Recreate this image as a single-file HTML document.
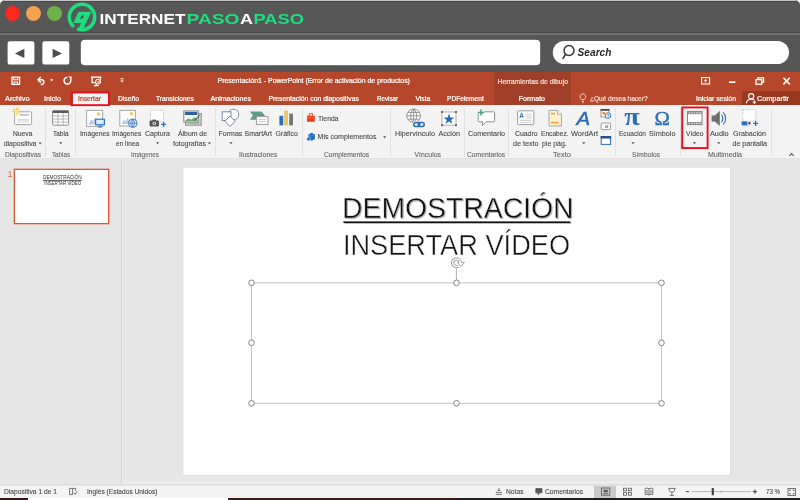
<!DOCTYPE html>
<html><head><meta charset="utf-8"><title>PowerPoint</title>
<style>
html,body{margin:0;padding:0;overflow:hidden;}
body{width:800px;height:500px;overflow:hidden;background:#fff;font-family:"Liberation Sans",sans-serif;position:relative;}
.a{position:absolute;}
.t{position:absolute;white-space:pre;-webkit-text-stroke:0.22px currentColor;line-height:10px;height:10px;transform-origin:0 50%;font-family:"Liberation Sans",sans-serif;}
.d{-webkit-text-stroke:0.1px currentColor;}
.sep{position:absolute;width:1px;top:108px;height:48px;background:#e1e1e1;}
svg{position:absolute;overflow:visible;}
#root{position:absolute;left:0;top:0;width:800px;height:500px;will-change:transform;opacity:0.9999;}
</style></head><body><div id="root">
<!-- browser frame -->
<div class="a" style="left:0;top:0;width:800px;height:72px;background:#575757;border-radius:5px 5px 0 0;"></div>
<div class="a" style="left:0;top:0;width:800px;height:8px;border-radius:5px 5px 0 0;border-top:1px solid #c4c4c4;box-sizing:border-box;"></div>
<div class="a" style="left:0;top:1px;width:800px;height:8px;border-radius:5px 5px 0 0;border-top:1px solid #494949;box-sizing:border-box;"></div>
<div class="a" style="left:0;top:32px;width:800px;height:1px;background:#4a4a4a;"></div>
<div class="a" style="left:0;top:33px;width:800px;height:2px;background:#6e6e6e;"></div>
<div class="a" style="left:0;top:35px;width:800px;height:37px;background:#565656;"></div>
<!-- traffic lights -->
<div class="a" style="left:4.9px;top:5.9px;width:15.4px;height:15.4px;border-radius:50%;background:#fb2a1c;"></div>
<div class="a" style="left:25.9px;top:5.9px;width:15.4px;height:15.4px;border-radius:50%;background:#f3a24e;"></div>
<div class="a" style="left:46.9px;top:5.9px;width:15.4px;height:15.4px;border-radius:50%;background:#6cb24b;"></div>
<!-- logo -->
<svg style="left:0;top:0" width="320" height="36" viewBox="0 0 320 36">
 <circle cx="82" cy="17" r="12.7" fill="none" stroke="#1fdc7e" stroke-width="3.6" stroke-dasharray="72.6 7.2" stroke-linecap="round" transform="rotate(136 82 17)"/>
 <path d="M79 12.4 H90.4 L83.2 27.2 H79.8 L82.2 22.4 H74.4 Z" fill="#1fdc7e" stroke="#1fdc7e" stroke-width="1.4" stroke-linejoin="round"/>
 <path d="M81.6 15.6 H84.2 L82.6 18.8 H80 Z" fill="#4a5a50"/>
 <text x="99.5" y="23.6" font-family="Liberation Sans, sans-serif" font-weight="bold" font-size="15.5" fill="#fff" textLength="86" lengthAdjust="spacingAndGlyphs">INTERNET</text>
 <text x="186.5" y="23.6" font-family="Liberation Sans, sans-serif" font-weight="bold" font-size="15.5" fill="#1fdc7e" textLength="53" lengthAdjust="spacingAndGlyphs">PASO</text>
 <text x="240" y="23.6" font-family="Liberation Sans, sans-serif" font-weight="bold" font-size="15.5" fill="#fff" textLength="13" lengthAdjust="spacingAndGlyphs">A</text>
 <text x="253.5" y="23.6" font-family="Liberation Sans, sans-serif" font-weight="bold" font-size="15.5" fill="#1fdc7e" textLength="50.5" lengthAdjust="spacingAndGlyphs">PASO</text>
</svg>
<!-- nav buttons -->
<svg style="left:0;top:0" width="800" height="72" viewBox="0 0 800 72">
 <rect x="7.6" y="41.3" width="26.8" height="23.3" rx="2.2" fill="#fff"/>
 <rect x="42.4" y="41.3" width="26.9" height="23.3" rx="2.2" fill="#fff"/>
 <path d="M15 53.4 L24.4 48.7 L24.4 58.1 Z" fill="#4c4c4c"/><path d="M62 53.4 L52.6 48.7 L52.6 58.1 Z" fill="#4c4c4c"/>
 <rect x="80.8" y="39.1" width="459.4" height="26.6" rx="4" fill="#484848"/>
 <rect x="80.8" y="39.7" width="459.4" height="25.6" rx="4" fill="#fff"/>
 <rect x="552.8" y="40.9" width="236.2" height="23.2" rx="11.6" fill="#fff"/>
</svg>
<svg style="left:555px;top:40px" width="70" height="26"><circle cx="14" cy="10.5" r="5" fill="none" stroke="#333" stroke-width="1.4"/><path d="M10.6 14.4 L8 18.4" stroke="#333" stroke-width="1.6" stroke-linecap="round"/>
<text x="22.5" y="15.6" font-family="Liberation Sans, sans-serif" font-style="italic" font-weight="bold" font-size="10" fill="#2a2a2a" textLength="34" lengthAdjust="spacingAndGlyphs">Search</text></svg>

<!-- powerpoint title + tabs -->
<div class="a" style="left:0;top:72px;width:800px;height:33px;background:#b7472a;"></div>
<div class="a" style="left:494px;top:72px;width:77px;height:33px;background:#9f3f27;"></div>
<div class="a" style="left:742px;top:91px;width:58px;height:14px;background:#98391f;"></div>
<div class="a" style="left:73px;top:93px;width:35px;height:12px;background:#f3f3f3;"></div>
<!-- ribbon -->
<div class="a" style="left:0;top:105px;width:800px;height:54px;background:#f3f3f3;"></div>
<div class="a" style="left:0;top:158px;width:800px;height:1px;background:#e2e2e2;"></div>
<!-- workspace -->
<div class="a" style="left:0;top:159px;width:800px;height:326px;background:#e6e6e6;"></div>
<div class="a" style="left:121px;top:159px;width:1px;height:325px;background:#d6d6d6;"></div>
<div class="a" style="left:122px;top:159px;width:1px;height:325px;background:#ececec;"></div>
<div class="a" style="left:123px;top:481px;width:677px;height:3px;background:#ececec;"></div>
<!-- thumbnail -->
<div class="a" style="left:13.6px;top:169px;width:93px;height:53px;border:1px solid #dc5733;box-shadow:0 0 0 0.5px #e48a6e;background:#fff;"></div>
<!-- slide -->

<!-- status bar -->
<div class="a" style="left:0;top:484px;width:800px;height:14px;background:#f4f4f4;"></div>
<div class="a" style="left:0;top:484px;width:800px;height:2px;background:linear-gradient(#dcdcdc,#e6e6e6);"></div>
<div class="a" style="left:0;top:497.5px;width:800px;height:2.5px;background:#fff;"></div>
<div class="a" style="left:0;top:497.5px;width:28px;height:2.5px;background:#34121c;"></div>
<div class="a" style="left:228px;top:497.5px;width:232px;height:2.5px;background:#3a1a1a;"></div>
<div class="a" style="left:460px;top:497.5px;width:340px;height:2.5px;background:#1e1e1e;"></div>
<div class="a" style="left:594px;top:486px;width:22px;height:11.5px;background:#c9c9c9;"></div>

<!-- ribbon separators -->
<div class="sep" style="left:45px"></div><div class="sep" style="left:75px"></div><div class="sep" style="left:215px"></div>
<div class="sep" style="left:302px"></div><div class="sep" style="left:390px"></div><div class="sep" style="left:464px"></div>
<div class="sep" style="left:508px"></div><div class="sep" style="left:614.5px"></div><div class="sep" style="left:679.5px"></div><div class="sep" style="left:771px"></div>

<svg style="left:0;top:0" width="800" height="500" viewBox="0 0 800 500">
<!-- ===== title bar quick access icons ===== -->
<g fill="none" stroke="#fff" stroke-width="1.3">
 <path d="M12 77.2 H19.6 V84.4 H12 Z"/>
 <path d="M13.8 77.2 V79.8 H17.8 V77.2" stroke-width="1.1"/>
 <path d="M14 84.4 V82 H17.6 V84.4" stroke-width="1.1"/>
 <!-- undo -->
 <path d="M38.2 79.8 H42.4 A2.5 2.5 0 0 1 42.4 84.4 H40.8" stroke-width="1.5"/>
 <path d="M40.8 77 L38 79.8 L40.8 82.6" stroke-width="1.5"/>
 <!-- redo -->
 <path d="M70.4 79 A3.4 3.4 0 1 1 67.4 77.3" stroke-width="1.5"/>
 <path d="M68.2 76.4 L71.6 76.4 L71.6 79.8 Z" fill="#fff" stroke="none"/>
 <!-- present -->
 <path d="M91 77.2 H101.4" stroke-width="1.4"/>
 <path d="M92.2 77.4 V82.6 H100.2 V77.4"/>
 <path d="M96.2 82.8 V85.2 M93.8 85.6 H98.6"/>
 <circle cx="97.8" cy="81.8" r="2.4" fill="#b7472a" stroke-width="1"/>
 <path d="M96.6 81.6 L99.2 82 L97.2 83.2" stroke-width="0.7"/>
</g>
<path d="M50 79.2 H53.4 L51.7 81.4 Z" fill="#fff"/>
<path d="M120.6 78.8 H123.6" stroke="#fff" stroke-width="1"/>
<path d="M120.4 80.6 H123.8 L122.1 82.6 Z" fill="#fff"/>
<!-- window controls -->
<g fill="none" stroke="#fff" stroke-width="1.1">
 <rect x="701.6" y="77.6" width="8" height="6.4"/>
 <path d="M705.6 82.6 V79.6 M704.2 80.8 L705.6 79.4 L707 80.8" stroke-width="0.9"/>
 <path d="M729 82.2 H735.4" stroke-width="1.6"/>
 <rect x="756" y="79.6" width="5.8" height="4.6" stroke-width="1.3"/>
 <path d="M757.8 79.4 V77.8 H763.6 V82.2 H762" stroke-width="1.3"/>
 <path d="M783.4 77.8 L789.8 84.4 M789.8 77.8 L783.4 84.4" stroke-width="1.6"/>
</g>
<!-- lightbulb -->
<g fill="none" stroke="#f6ddd5" stroke-width="0.9">
 <path d="M581.6 99.6 C579.4 97.6 579.4 94.2 582.9 93.8 C586.4 94.2 586.4 97.6 584.2 99.6 Z"/>
 <path d="M581.8 101.2 H584 M582.2 102.6 H583.6"/>
</g>
<!-- share person -->
<g fill="none" stroke="#fff" stroke-width="1.1">
 <circle cx="751.2" cy="96.2" r="2.6"/>
 <path d="M746.4 103.4 C746.6 99.6 749 99.2 751.2 99.2 C752.6 99.2 753.6 99.6 754.2 100.2"/>
 <path d="M754.4 100.4 V104 M752.6 102.2 H756.2" stroke-width="1"/>
</g>

<!-- ===== ribbon icons ===== -->
<!-- Nueva diapositiva -->
<rect x="14.6" y="111.8" width="17" height="12.8" rx="1" fill="#fff" stroke="#a0a0a0" stroke-width="1"/>
<rect x="19.6" y="114" width="9.6" height="1.8" fill="#c4c4c4"/>
<rect x="17.4" y="119.2" width="11.6" height="1.4" fill="#cfcfcf"/>
<rect x="17.4" y="121.4" width="11.6" height="1" fill="#dcdcdc"/>
<g stroke="#f0c93c" stroke-width="1.1"><path d="M16.4 107.6 V115.2 M12.6 111.4 H20.2 M13.7 108.7 L19.1 114.1 M19.1 108.7 L13.7 114.1"/></g>
<circle cx="16.4" cy="111.4" r="2" fill="#fbe58a"/>
<!-- Tabla -->
<rect x="52.6" y="110.8" width="16" height="14.4" rx="1" fill="#fff" stroke="#8e8e8e" stroke-width="1"/>
<rect x="52.6" y="110.6" width="16" height="2.4" fill="#595959"/>
<g stroke="#a8a8a8" stroke-width="0.8"><path d="M53 116 H68.4 M53 119 H68.4 M53 122 H68.4 M57.9 113 V125 M63.2 113 V125"/></g>
<!-- Imágenes -->
<rect x="86.6" y="110.4" width="16" height="16" fill="#fff" stroke="#a6a6a6" stroke-width="1"/>
<path d="M88.4 124.4 L91.2 119.4 L93 121.6 L95 117.4 L96.6 120 V124.4 Z" fill="#b6cde6"/>
<circle cx="98.6" cy="114" r="1.7" fill="#f2c84a"/>
<rect x="95.6" y="119.2" width="8.8" height="5.6" fill="#dcebfa" stroke="#2e75c8" stroke-width="1.2"/>
<path d="M100 125 V126.6 M97.8 127 H102.2" stroke="#2e75c8" stroke-width="1.1"/>
<!-- Imágenes en línea -->
<rect x="119.8" y="110.4" width="15.6" height="15.6" fill="#fff" stroke="#a6a6a6" stroke-width="1"/>
<path d="M121.6 124 L124 119.6 L125.6 121.6 L127.6 117.6 L129.6 121 V124 Z" fill="#b6cde6"/>
<circle cx="131.4" cy="113.8" r="1.7" fill="#f2c84a"/>
<circle cx="132.8" cy="123.2" r="4.1" fill="#dce9f8" stroke="#3a78c4" stroke-width="1"/>
<path d="M128.8 123.2 H136.8 M132.8 119.2 V127.2 M132.8 119.2 C130.4 121.4 130.4 125 132.8 127.2 M132.8 119.2 C135.2 121.4 135.2 125 132.8 127.2" fill="none" stroke="#3a78c4" stroke-width="0.7"/>
<!-- Captura -->
<rect x="150.4" y="110.2" width="13" height="11" fill="#fff" stroke="#b4b4b4" stroke-width="0.9" stroke-dasharray="1.2 1.2"/>
<rect x="149.6" y="120.6" width="9.4" height="5.8" rx="0.8" fill="#555"/>
<rect x="152.4" y="119.6" width="3.6" height="1.6" fill="#555"/>
<circle cx="154.3" cy="123.5" r="1.8" fill="#f3f3f3"/><circle cx="154.3" cy="123.5" r="0.9" fill="#555"/>
<path d="M163.6 121.8 V127 M161 124.4 H166.2" stroke="#2e75c8" stroke-width="1.4"/>
<!-- Álbum -->
<rect x="185.6" y="113.6" width="15.6" height="11.6" fill="#d4d4d4" stroke="#8c8c8c" stroke-width="1"/>
<rect x="187.6" y="122.6" width="11.6" height="1.2" fill="#a8a8a8"/>
<rect x="183.8" y="111" width="14.4" height="11" fill="#fff" stroke="#7c7c7c" stroke-width="1"/>
<rect x="184.8" y="112" width="12.4" height="3" fill="#2f5f9c"/>
<path d="M184.8 116.6 C186.6 114 188 115.4 189.4 116 C191 114.4 193 114.6 194.6 116.4 L197.2 116.4 V118 H184.8 Z" fill="#e8f0f8"/>
<path d="M184.8 121 L188 118.4 L191.2 119.6 L194.6 117.6 L197.2 118.6 V121 Z" fill="#6aa86a"/>
<path d="M194.6 120.6 L199.6 115.2" stroke="#666" stroke-width="1.1"/>
<!-- Formas -->
<g fill="#fff" stroke="#7a87a6" stroke-width="1">
 <circle cx="233.4" cy="114.6" r="5.4"/>
 <rect x="222.2" y="111.8" width="8.8" height="8.8"/>
 <path d="M230 116 L235.2 121.2 L230 126.4 L224.8 121.2 Z"/>
</g>
<!-- SmartArt -->
<path d="M249.8 111.6 H261.6 L264.8 115.6 L261.6 119.8 H249.8 L253 115.6 Z" fill="#5e9e88"/>
<rect x="256.4" y="116.6" width="11.6" height="7.8" fill="#fff" stroke="#9a9a9a" stroke-width="1"/>
<path d="M258.6 119.4 H265.8 M258.6 121.6 H265.8" stroke="#c4c4c4" stroke-width="0.9"/>
<!-- Gráfico -->
<rect x="279.4" y="115.8" width="3.8" height="9.6" fill="#2e6db4"/>
<rect x="284.2" y="110.6" width="3.8" height="14.8" fill="#eac56e"/>
<rect x="289.2" y="113.6" width="3.8" height="11.8" fill="#767676"/>
<!-- Tienda -->
<path d="M307 115.6 H314.8 V121.8 H307 Z" fill="#e8431f"/>
<path d="M309.2 115.6 V113.8 H312.6 V115.6" fill="none" stroke="#e8431f" stroke-width="1"/>
<path d="M307 117.6 H314.8" stroke="#f47a55" stroke-width="0.6"/>
<!-- Mis complementos -->
<path d="M308.4 134.4 L311.6 132.8 L314.9 134.4 V139 L311.6 140.7 L308.4 139 Z" fill="#1f6fc8"/>
<path d="M308.4 134.4 L311.6 136 L314.9 134.4" fill="none" stroke="#5c9be0" stroke-width="0.6"/>
<circle cx="308.6" cy="138.9" r="1.9" fill="#1f6fc8" stroke="#f3f3f3" stroke-width="0.5"/>
<!-- Hipervínculo -->
<g fill="none" stroke="#8a8a8a" stroke-width="0.9">
 <circle cx="413.6" cy="115.8" r="6.8" fill="#fff"/>
 <path d="M406.8 115.8 H420.4 M413.6 109 V122.6 M408 112.4 H419.2 M408 119.2 H419.2"/>
 <path d="M413.6 109 C409.6 112.6 409.6 119 413.6 122.6 M413.6 109 C417.6 112.6 417.6 119 413.6 122.6"/>
</g>
<g fill="none" stroke="#2e6db4" stroke-width="1.5">
 <rect x="413.8" y="122.6" width="6" height="3.8" rx="1.9" stroke="#f3f3f3" stroke-width="3"/>
 <rect x="418.2" y="122.6" width="6" height="3.8" rx="1.9" stroke="#f3f3f3" stroke-width="3"/>
 <rect x="413.8" y="122.6" width="6" height="3.8" rx="1.9"/>
 <rect x="418.2" y="122.6" width="6" height="3.8" rx="1.9"/>
</g>
<!-- Acción -->
<rect x="442" y="112" width="14" height="13.2" fill="#fff" stroke="#a8a8a8" stroke-width="0.9"/>
<g fill="#666"><rect x="441" y="111" width="2" height="2"/><rect x="455" y="111" width="2" height="2"/><rect x="441" y="124.2" width="2" height="2"/><rect x="455" y="124.2" width="2" height="2"/></g>
<path d="M449 113.6 L450.4 117.4 L454.4 117.5 L451.2 119.9 L452.4 123.8 L449 121.5 L445.6 123.8 L446.8 119.9 L443.6 117.5 L447.6 117.4 Z" fill="#2e6db4"/>
<!-- Comentario -->
<path d="M479 111.8 H493.6 Q494.6 111.8 494.6 112.8 V120.8 Q494.6 121.8 493.6 121.8 H486 L482.4 125.6 V121.8 H479 Q478.2 121.8 478.2 120.8 V112.8 Q478.2 111.8 479 111.8 Z" fill="#fff" stroke="#8c8c8c" stroke-width="1"/>
<path d="M481 109.4 V115.8 M477.8 112.6 H484.2" stroke="#f3f3f3" stroke-width="3"/>
<path d="M481 109.6 V115.6 M478 112.6 H484" stroke="#4e9e78" stroke-width="1.5"/>
<!-- Cuadro de texto -->
<rect x="517.6" y="110.8" width="16.2" height="13.8" rx="0.8" fill="#fff" stroke="#9a9a9a" stroke-width="1"/>
<text x="519.2" y="118.4" font-family="Liberation Sans, sans-serif" font-weight="bold" font-size="6.4" fill="#2e6db4">A</text>
<path d="M525.6 114.2 H531.6 M525.6 116.2 H531.6 M525.6 118.2 H531.6 M519.8 120.4 H531.6 M519.8 122.4 H531.6" stroke="#c2c2c2" stroke-width="0.8"/>
<!-- Encabez pie -->
<path d="M549 110.4 H557.6 L561.4 114.2 V126 H549 Z" fill="#fdf1cf" stroke="#a8a8a8" stroke-width="1"/>
<path d="M557.6 110.4 V114.2 H561.4" fill="#fff" stroke="#a8a8a8" stroke-width="0.9"/>
<rect x="551" y="112.8" width="4" height="1.6" fill="#e9a23c"/>
<rect x="551" y="121.8" width="7.6" height="1.6" fill="#e9a23c"/>
<!-- WordArt A -->
<text x="576.6" y="124.8" font-family="Liberation Sans, sans-serif" font-style="italic" font-size="18.5" fill="#2e6db4" stroke="#2e6db4" stroke-width="0.5" textLength="13.6" lengthAdjust="spacingAndGlyphs">A</text>
<!-- small icons column -->
<rect x="601" y="109.4" width="8" height="7.6" fill="#fff" stroke="#8e8e8e" stroke-width="0.9"/>
<rect x="600.6" y="109" width="8.8" height="1.8" fill="#4a4a4a"/>
<rect x="602.4" y="112" width="2.6" height="2.4" fill="#e98a3c"/>
<circle cx="608" cy="115.6" r="2.8" fill="#eaf2fb" stroke="#2e6db4" stroke-width="0.9"/>
<path d="M608 114 V115.8 H609.4" fill="none" stroke="#2e6db4" stroke-width="0.7"/>
<rect x="601.2" y="123" width="9.4" height="6.6" rx="0.8" fill="#fff" stroke="#8e8e8e" stroke-width="0.9"/>
<path d="M605.4 127.8 L606.4 125.4 M607 127.8 L608 125.4 M605 126 H608.4 M604.8 127.2 H608.2" stroke="#555" stroke-width="0.5"/>
<rect x="601.2" y="136.6" width="9.4" height="7.8" fill="#fff" stroke="#2e6db4" stroke-width="1"/>
<rect x="600.7" y="136.1" width="10.4" height="2.4" fill="#1f4e8c"/>
<!-- Ecuación / Símbolo -->
<text x="624.2" y="124.8" font-family="Liberation Serif, serif" font-weight="bold" font-size="25.5" fill="#2e6db4" textLength="15.4" lengthAdjust="spacingAndGlyphs">π</text>
<text x="654.6" y="124.6" font-family="Liberation Serif, serif" font-size="19.8" fill="#2e6db4" stroke="#2e6db4" stroke-width="0.4" textLength="15.4" lengthAdjust="spacingAndGlyphs">Ω</text>
<!-- Vídeo -->
<rect x="687.4" y="111.6" width="14.6" height="13" fill="#fff" stroke="#7c7c7c" stroke-width="1"/>
<rect x="687.4" y="111.6" width="14.6" height="2.6" fill="#8a8a8a"/>
<rect x="687.4" y="122" width="14.6" height="2.6" fill="#8a8a8a"/>
<g fill="#f3f3f3"><rect x="688.8" y="112.4" width="1.2" height="1.1"/><rect x="691.2" y="112.4" width="1.2" height="1.1"/><rect x="693.6" y="112.4" width="1.2" height="1.1"/><rect x="696" y="112.4" width="1.2" height="1.1"/><rect x="698.4" y="112.4" width="1.2" height="1.1"/><rect x="700.4" y="112.4" width="0.9" height="1.1"/>
<rect x="688.8" y="122.8" width="1.2" height="1.1"/><rect x="691.2" y="122.8" width="1.2" height="1.1"/><rect x="693.6" y="122.8" width="1.2" height="1.1"/><rect x="696" y="122.8" width="1.2" height="1.1"/><rect x="698.4" y="122.8" width="1.2" height="1.1"/><rect x="700.4" y="122.8" width="0.9" height="1.1"/></g>
<!-- Audio -->
<path d="M711.6 115.4 H714.8 L719.8 110.8 V126 L714.8 121.4 H711.6 Z" fill="#6e6e6e"/>
<path d="M721.4 114.6 C723.2 116.6 723.2 120.2 721.4 122.2 M723.2 112.4 C726.4 115.4 726.4 121.4 723.2 124.4" fill="none" stroke="#2e6db4" stroke-width="1.1"/>
<!-- Grabación de pantalla -->
<rect x="742.8" y="109.8" width="13" height="11.4" fill="#fff" stroke="#b8b8b8" stroke-width="0.9" stroke-dasharray="1.2 1.2"/>
<rect x="741.6" y="121.4" width="5.6" height="3.6" fill="#2e6db4"/>
<path d="M747.2 123.2 L750.4 121.4 V125 Z" fill="#444"/>
<rect x="742.4" y="125.2" width="6" height="1" fill="#b0b0b0"/>
<path d="M755.6 120.8 V126 M753 123.4 H758.2" stroke="#2e75c8" stroke-width="1.4"/>
<!-- dropdown arrows -->
<g fill="#555">
 <path d="M38.6 142.6 H41.8 L40.2 144.6 Z"/>
 <path d="M59.2 142.2 H62.4 L60.8 144.2 Z"/>
 <path d="M156 142.2 H159.2 L157.6 144.2 Z"/>
 <path d="M207.8 142.6 H211 L209.4 144.6 Z"/>
 <path d="M229.4 142.2 H232.6 L231 144.2 Z"/>
 <path d="M383 136.2 H386.2 L384.6 138.2 Z"/>
 <path d="M582.2 142.2 H585.4 L583.8 144.2 Z"/>
 <path d="M631.4 142.2 H634.6 L633 144.2 Z"/>
 <path d="M692.9 142.2 H696.1 L694.5 144.2 Z"/>
 <path d="M717.2 142.2 H720.4 L718.8 144.2 Z"/>
</g>
<path d="M789.4 156 L791.6 153.6 L793.8 156" fill="none" stroke="#555" stroke-width="1.1"/>

<!-- ===== status bar icons ===== -->
<g fill="none" stroke="#555" stroke-width="0.8">
 <!-- spell book -->
 <path d="M69.6 488.4 H72.6 V494.6 H69.6 Z M72.6 488.4 H75.6 V491"/>
 <path d="M73.8 492.8 L75 494.4 L77.2 491.4"/>
 <!-- notas -->
 <path d="M495.8 492.4 H502 M495.8 494.4 H502 M497.4 490.4 H500.4 M498.9 488 V490.4"/>
 <!-- comentarios bubble -->
 <path d="M535.8 488.6 H542 V492.8 H539.4 L538 494.8 V492.8 H535.8 Z" fill="#555"/>
 <!-- normal view -->
 <rect x="601.4" y="488" width="8.4" height="7.2"/>
 <rect x="603.6" y="489.8" width="4.2" height="2.4" fill="#555" stroke="none"/>
 <path d="M603.2 493.6 H608.2"/>
 <!-- slide sorter -->
 <rect x="623.4" y="488.2" width="3" height="2.6"/><rect x="628.6" y="488.2" width="3" height="2.6"/>
 <rect x="623.4" y="492.6" width="3" height="2.6"/><rect x="628.6" y="492.6" width="3" height="2.6"/>
 <!-- reading view -->
 <path d="M649 488.8 V495 M649 488.8 C647.6 488 646.4 488 645.2 488.4 V494.6 C646.4 494.2 647.6 494.2 649 495 M649 488.8 C650.4 488 651.6 488 652.8 488.4 V494.6 C651.6 494.2 650.4 494.2 649 495"/>
 <path d="M646.4 490 V493.4 M647.6 490 V493.6 M650.4 490 V493.6 M651.6 490 V493.4" stroke-width="0.5"/>
 <!-- slideshow -->
 <path d="M668.2 488.4 H675.6 M669.2 488.6 V490.4 C669.2 492.6 674.6 492.6 674.6 490.4 V488.6 M671.9 492.2 V495 M669.8 495.4 H674"/>
 <!-- zoom -->
 <path d="M686 491.6 H689" stroke-width="1.2"/>
 <path d="M691.6 491.6 H751" stroke="#a8a8a8" stroke-width="0.8"/>
 <path d="M721.3 490 V493.2" stroke="#a8a8a8" stroke-width="0.8"/>
 <rect x="711.7" y="488" width="2.2" height="7.2" fill="#444" stroke="none"/>
 <path d="M752.8 491.6 H757 M754.9 489.5 V493.7" stroke-width="1.2"/>
 <!-- fit -->
 <rect x="788" y="488.4" width="7.6" height="7.2"/>
 <path d="M789.6 491 V490 H790.8 M792.8 490 H794 V491 M794 493 V494 H792.8 M790.8 494 H789.6 V493" stroke-width="0.9"/>
</g>
</svg>

<svg style="left:0;top:0" width="800" height="500" viewBox="0 0 800 500">
 <rect x="182.7" y="167.1" width="547.8" height="308.2" fill="#dadada"/>
 <rect x="183.2" y="167.6" width="546.8" height="307.2" fill="#fff"/>
 <!-- title text with soft shadow -->
 <g font-family="Liberation Sans, sans-serif" font-size="29.6">
  <text x="342.1" y="217.5" fill="#141414" stroke="#fff" stroke-width="0.45" textLength="231.4" lengthAdjust="spacingAndGlyphs">DEMOSTRACIÓN</text>
  <rect x="343.4" y="221.4" width="227" height="1.6" fill="#141414"/>
  <text x="342.9" y="255" fill="#141414" stroke="#fff" stroke-width="0.45" textLength="227.2" lengthAdjust="spacingAndGlyphs">INSERTAR VÍDEO</text>
  <g style="mix-blend-mode:multiply" fill="#bcbcbc">
   <text x="343.1" y="218.5" textLength="231.4" lengthAdjust="spacingAndGlyphs">DEMOSTRACIÓN</text>
   <rect x="344.4" y="222.4" width="227" height="1.6"/>
  </g>
 </g>
 <!-- text box selection -->
 <rect x="251.5" y="282.8" width="410" height="120.5" fill="none" stroke="#c4c4c4" stroke-width="1"/>
 <path d="M456.4 268.4 L456.4 280" stroke="#a9a9a9" stroke-width="0.9"/>
 <g fill="#fff" stroke="#767676" stroke-width="0.9">
  <circle cx="251.5" cy="282.8" r="2.8"/><circle cx="456.5" cy="282.8" r="2.8"/><circle cx="661.5" cy="282.8" r="2.8"/>
  <circle cx="251.5" cy="342.8" r="2.8"/><circle cx="661.5" cy="342.8" r="2.8"/>
  <circle cx="251.5" cy="403.3" r="2.8"/><circle cx="456.5" cy="403.3" r="2.8"/><circle cx="661.5" cy="403.3" r="2.8"/>
 </g>
 <!-- rotate handle -->
 <path d="M458.3 266.1 A3.8 3.8 0 1 1 460.15 262.1" fill="none" stroke="#8c8c8c" stroke-width="3.2"/>
 <path d="M457.4 262.3 H464.4 L460.9 266.6 Z" fill="#fff" stroke="#8c8c8c" stroke-width="0.8"/>
 <path d="M458.3 266.1 A3.8 3.8 0 1 1 460.15 262.1" fill="none" stroke="#fff" stroke-width="1.6"/>
 <path d="M460 261.6 L460.3 263" stroke="#fff" stroke-width="1.7"/>
 <!-- thumbnail text -->
 <g font-family="Liberation Sans, sans-serif" font-size="5.3" fill="#2c2c2c">
  <text x="43" y="179.4" textLength="38.6" lengthAdjust="spacingAndGlyphs">DEMOSTRACIÓN</text>
  <rect x="43" y="179.9" width="38.8" height="0.8" fill="#2c2c2c"/>
  <text x="44.2" y="185.1" textLength="37" lengthAdjust="spacingAndGlyphs">INSERTAR VÍDEO</text>
  <text x="7.8" y="176.8" font-size="8.2" fill="#dd5f3a">1</text>
 </g>
</svg>

<span class="t" style="left:217.5px;top:76.0px;font-size:6.94px;color:#fff;">Presentación1 - PowerPoint (Error de activación de productos)</span>
<span class="t" style="left:497.5px;top:76.5px;font-size:6.82px;color:#f3d9d0;">Herramientas de dibujo</span>
<span class="t" style="left:5.0px;top:93.5px;font-size:7.3px;color:#fff;transform:scaleX(1.006);">Archivo</span>
<span class="t" style="left:44.0px;top:93.5px;font-size:7.28px;color:#fff;">Inicio</span>
<span class="t" style="left:78.0px;top:93.5px;font-size:6.8px;color:#b7472a;">Insertar</span>
<span class="t" style="left:118.0px;top:93.5px;font-size:6.8px;color:#fff;transform:scaleX(0.992);">Diseño</span>
<span class="t" style="left:156.0px;top:93.5px;font-size:6.8px;color:#fff;transform:scaleX(0.992);">Transiciones</span>
<span class="t" style="left:210.5px;top:93.5px;font-size:7.07px;color:#fff;">Animaciones</span>
<span class="t" style="left:268.4px;top:93.5px;font-size:6.85px;color:#fff;">Presentación con diapositivas</span>
<span class="t" style="left:377.0px;top:93.5px;font-size:6.8px;color:#fff;transform:scaleX(0.911);">Revisar</span>
<span class="t" style="left:415.4px;top:93.5px;font-size:6.8px;color:#fff;">Vista</span>
<span class="t" style="left:447.0px;top:93.5px;font-size:6.8px;color:#fff;transform:scaleX(0.972);">PDFelement</span>
<span class="t" style="left:518.8px;top:93.5px;font-size:7.05px;color:#fff;">Formato</span>
<span class="t" style="left:590.0px;top:93.5px;font-size:6.8px;color:#f6ddd5;transform:scaleX(0.957);">¿Qué desea hacer?</span>
<span class="t" style="left:696.0px;top:93.5px;font-size:6.85px;color:#fff;">Iniciar sesión</span>
<span class="t" style="left:757.0px;top:93.5px;font-size:7.29px;color:#fff;">Compartir</span>
<span class="t d" style="left:13.0px;top:129.0px;font-size:6.8px;color:#484848;transform:scaleX(0.992);">Nueva</span>
<span class="t d" style="left:3.7px;top:138.5px;font-size:6.94px;color:#484848;">diapositiva</span>
<span class="t d" style="left:53.0px;top:129.0px;font-size:6.8px;color:#484848;transform:scaleX(0.953);">Tabla</span>
<span class="t d" style="left:80.0px;top:129.0px;font-size:6.8px;color:#484848;transform:scaleX(0.988);">Imágenes</span>
<span class="t d" style="left:112.4px;top:129.0px;font-size:6.8px;color:#484848;transform:scaleX(0.981);">Imágenes</span>
<span class="t d" style="left:115.8px;top:138.5px;font-size:6.8px;color:#484848;transform:scaleX(0.959);">en línea</span>
<span class="t d" style="left:145.0px;top:129.0px;font-size:7.03px;color:#484848;">Captura</span>
<span class="t d" style="left:178.0px;top:129.0px;font-size:6.86px;color:#484848;">Álbum de</span>
<span class="t d" style="left:173.0px;top:138.5px;font-size:6.98px;color:#484848;">fotografías</span>
<span class="t d" style="left:218.6px;top:129.0px;font-size:6.99px;color:#484848;">Formas</span>
<span class="t d" style="left:244.5px;top:129.0px;font-size:6.97px;color:#484848;">SmartArt</span>
<span class="t d" style="left:275.5px;top:129.0px;font-size:6.92px;color:#484848;">Gráfico</span>
<span class="t d" style="left:317.6px;top:113.5px;font-size:6.8px;color:#484848;transform:scaleX(0.993);">Tienda</span>
<span class="t d" style="left:317.6px;top:132.0px;font-size:7.07px;color:#484848;">Mis complementos</span>
<span class="t d" style="left:395.0px;top:129.0px;font-size:7.2px;color:#484848;">Hipervínculo</span>
<span class="t d" style="left:438.4px;top:129.0px;font-size:7.2px;color:#484848;">Acción</span>
<span class="t d" style="left:468.0px;top:129.0px;font-size:7.16px;color:#484848;">Comentario</span>
<span class="t d" style="left:515.0px;top:129.0px;font-size:6.86px;color:#484848;">Cuadro</span>
<span class="t d" style="left:513.0px;top:138.5px;font-size:7.19px;color:#484848;">de texto</span>
<span class="t d" style="left:541.0px;top:129.0px;font-size:6.8px;color:#484848;transform:scaleX(0.973);">Encabez.</span>
<span class="t d" style="left:542.0px;top:138.5px;font-size:6.94px;color:#484848;">pie pág.</span>
<span class="t d" style="left:571.0px;top:129.0px;font-size:7.3px;color:#484848;transform:scaleX(1.013);">WordArt</span>
<span class="t d" style="left:619.0px;top:129.0px;font-size:6.8px;color:#484848;transform:scaleX(0.965);">Ecuación</span>
<span class="t d" style="left:649.0px;top:129.0px;font-size:7.22px;color:#484848;">Símbolo</span>
<span class="t d" style="left:686.0px;top:129.0px;font-size:6.8px;color:#484848;transform:scaleX(0.990);">Vídeo</span>
<span class="t d" style="left:710.0px;top:129.0px;font-size:7.3px;color:#484848;">Audio</span>
<span class="t d" style="left:733.0px;top:129.0px;font-size:7.15px;color:#484848;">Grabación</span>
<span class="t d" style="left:732.5px;top:138.5px;font-size:7.05px;color:#484848;">de pantalla</span>
<span class="t d" style="left:5.0px;top:149.5px;font-size:6.8px;color:#646464;transform:scaleX(0.982);">Diapositivas</span>
<span class="t d" style="left:52.0px;top:149.5px;font-size:6.8px;color:#646464;transform:scaleX(0.916);">Tablas</span>
<span class="t d" style="left:131.0px;top:149.5px;font-size:6.8px;color:#646464;transform:scaleX(0.937);">Imágenes</span>
<span class="t d" style="left:239.0px;top:149.5px;font-size:6.86px;color:#646464;">Ilustraciones</span>
<span class="t d" style="left:323.8px;top:149.5px;font-size:6.8px;color:#646464;transform:scaleX(0.988);">Complementos</span>
<span class="t d" style="left:414.5px;top:149.5px;font-size:6.91px;color:#646464;">Vínculos</span>
<span class="t d" style="left:467.0px;top:149.5px;font-size:6.8px;color:#646464;transform:scaleX(0.986);">Comentarios</span>
<span class="t d" style="left:553.0px;top:149.5px;font-size:7.3px;color:#646464;transform:scaleX(1.031);">Texto</span>
<span class="t d" style="left:632.0px;top:149.5px;font-size:6.8px;color:#646464;transform:scaleX(0.988);">Símbolos</span>
<span class="t d" style="left:708.0px;top:149.5px;font-size:7.03px;color:#646464;">Multimedia</span>
<span class="t d" style="left:4.0px;top:486.5px;font-size:6.8px;color:#484848;transform:scaleX(0.980);">Diapositiva 1 de 1</span>
<span class="t d" style="left:87.0px;top:486.5px;font-size:6.8px;color:#484848;transform:scaleX(0.976);">Inglés (Estados Unidos)</span>
<span class="t d" style="left:505.5px;top:486.5px;font-size:6.8px;color:#484848;transform:scaleX(0.985);">Notas</span>
<span class="t d" style="left:545.0px;top:486.5px;font-size:6.8px;color:#484848;transform:scaleX(0.986);">Comentarios</span>
<span class="t d" style="left:766.0px;top:486.5px;font-size:6.8px;color:#484848;transform:scaleX(0.903);">73 %</span>
<!-- red highlights -->
<svg style="left:0;top:0" width="800" height="200" viewBox="0 0 800 200"><rect x="71.45" y="92.45" width="37.5" height="12.7" fill="none" stroke="#e60f1e" stroke-width="1.9"/><rect x="682.2" y="107.45" width="25.4" height="40.6" fill="none" stroke="#e60f1e" stroke-width="1.9"/></svg>
</div></body></html>
